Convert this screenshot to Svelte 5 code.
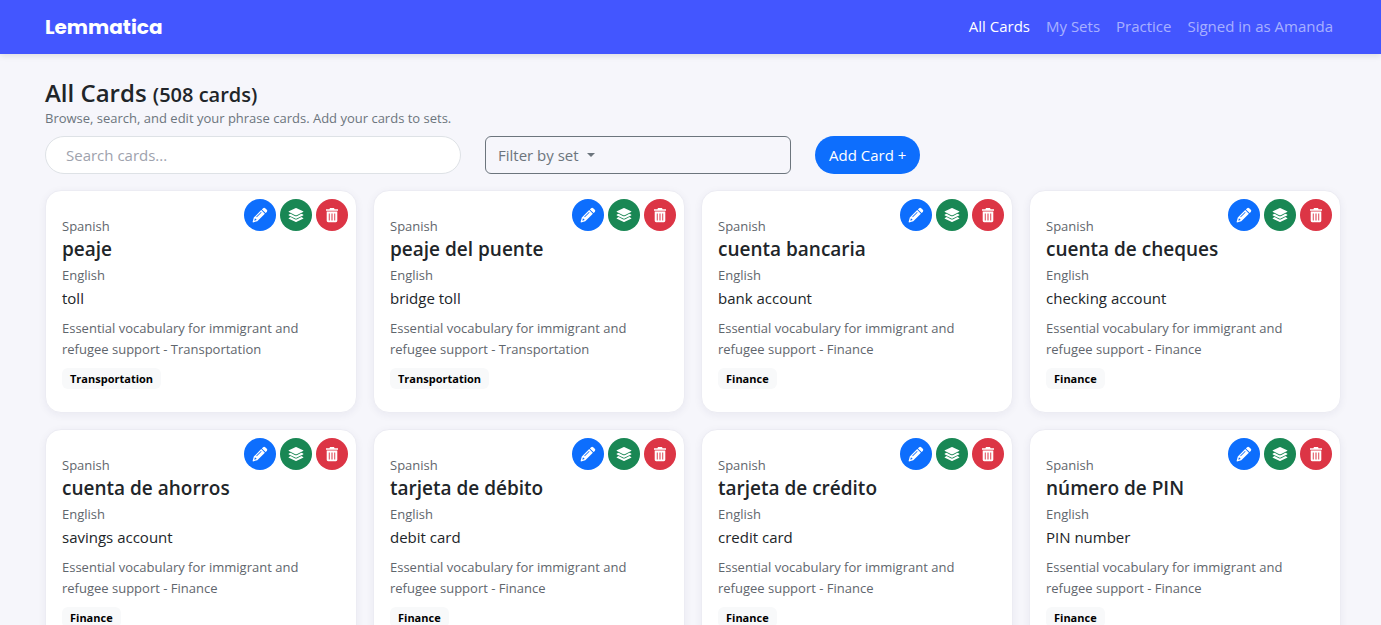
<script lang="ts">
  type Card = {
    id: number;
    phrase: string;
    translation: string;
    set: string;
  };

  const links = ['All Cards', 'My Sets', 'Practice', 'Signed in as Amanda'];
  const total = 508;

  const cards: Card[] = [
    { id: 1, phrase: 'peaje', translation: 'toll', set: 'Transportation' },
    { id: 2, phrase: 'peaje del puente', translation: 'bridge toll', set: 'Transportation' },
    { id: 3, phrase: 'cuenta bancaria', translation: 'bank account', set: 'Finance' },
    { id: 4, phrase: 'cuenta de cheques', translation: 'checking account', set: 'Finance' },
    { id: 5, phrase: 'cuenta de ahorros', translation: 'savings account', set: 'Finance' },
    { id: 6, phrase: 'tarjeta de débito', translation: 'debit card', set: 'Finance' },
    { id: 7, phrase: 'tarjeta de crédito', translation: 'credit card', set: 'Finance' },
    { id: 8, phrase: 'número de PIN', translation: 'PIN number', set: 'Finance' }
  ];

  let search = $state('');

  let visible = $derived(
    cards.filter((c) => `${c.phrase} ${c.translation}`.toLowerCase().includes(search.toLowerCase()))
  );
</script>

<header class="navbar">
  <div class="container navbar-inner">
    <a class="brand" href="/">Lemmatica</a>
    <nav>
      {#each links as link, i}
        <a class="nav-link" class:active={i === 0} href="/">{link}</a>
      {/each}
    </nav>
  </div>
</header>

<main class="container">
  <h1>All Cards <small>({total} cards)</small></h1>
  <p class="subtitle">Browse, search, and edit your phrase cards. Add your cards to sets.</p>

  <div class="toolbar">
    <input class="search" type="search" placeholder="Search cards..." aria-label="Search cards" bind:value={search} />
    <button class="filter" type="button" aria-haspopup="true">
      Filter by set <span class="caret"></span>
    </button>
    <div class="add">
      <button class="add-button" type="button">Add Card +</button>
    </div>
  </div>

  <div class="cards">
    {#each visible as card (card.id)}
      <article class="card">
        <div class="actions">
          <button class="action edit" type="button" aria-label="Edit {card.phrase}">
            <svg viewBox="0 0 16 16" width="16" height="16">
              <path d="M11.1 1.2a1.5 1.5 0 0 1 2.1 0l1.6 1.6a1.5 1.5 0 0 1 0 2.1l-1.2 1.2-3.7-3.7z" />
              <path fill-rule="evenodd" d="M9.2 3.1 12.9 6.8 5.3 14.2 1 15.4.6 15 1.8 10.6zM9 4.9 4.2 9.7l.6.6 4.8-4.8zM2.9 11.6l-.6 2.1 2.1-.6-.2-1.2z" />
            </svg>
          </button>
          <button class="action sets" type="button" aria-label="Add {card.phrase} to a set">
            <svg viewBox="0 0 16 16" width="16" height="16">
              <path d="M.9 4.3 7.3 1.2a1.6 1.6 0 0 1 1.4 0l6.4 3.1q.7.4 0 .8L8.7 8.2a1.6 1.6 0 0 1-1.4 0L.9 5.1q-.7-.4 0-.8z" />
              <path d="M.9 7.6l1.7-.8 4.2 2.1q1.2.5 2.4 0l4.2-2.1 1.7.8q.7.4 0 .8l-6.4 3.1a1.6 1.6 0 0 1-1.4 0L.9 8.4q-.7-.4 0-.8z" />
              <path d="M.9 10.9l1.7-.8 4.2 2.1q1.2.5 2.4 0l4.2-2.1 1.7.8q.7.4 0 .8l-6.4 3.1a1.6 1.6 0 0 1-1.4 0L.9 11.7q-.7-.4 0-.8z" />
            </svg>
          </button>
          <button class="action delete" type="button" aria-label="Delete {card.phrase}">
            <svg viewBox="0 0 16 16" width="16" height="16">
              <path d="M2 2.2h3.4L6 1h4l.6 1.2H14v1.6H2z" />
              <path fill-rule="evenodd" d="M2.7 4.6h10.6v9.2q0 1.4-1.4 1.4H4.1q-1.4 0-1.4-1.4zM4.8 6.4v7h.9v-7zM7.5 6.4v7h1v-7zM10.3 6.4v7h.9v-7z" />
            </svg>
          </button>
        </div>
        <div class="language">Spanish</div>
        <h2>{card.phrase}</h2>
        <div class="language">English</div>
        <p class="translation">{card.translation}</p>
        <p class="notes">Essential vocabulary for immigrant and refugee support - {card.set}</p>
        <span class="badge">{card.set}</span>
      </article>
    {/each}
  </div>
</main>

<style>
  :global(body) {
    margin: 0;
    background-color: #f6f6fb;
    color: #212529;
    font-family: "Segoe UI", "Open Sans", "Noto Sans", sans-serif;
    font-size: 15px;
    line-height: 24px;
    overflow-x: hidden;
  }

  h1,
  h2,
  p {
    margin: 0;
  }

  button,
  input {
    box-sizing: border-box;
    font: inherit;
  }

  .container {
    box-sizing: border-box;
    max-width: 1386px;
    padding: 0 40px 0 45px;
  }

  .navbar {
    background-color: #4356ff;
    box-shadow: 0 2px 6px rgba(0, 0, 0, 0.1);
  }

  .navbar-inner {
    display: flex;
    align-items: center;
    justify-content: space-between;
    min-height: 54px;
  }

  .brand {
    color: #fff;
    font-family: Poppins, Inter, sans-serif;
    font-size: 20px;
    font-weight: 700;
    text-decoration: none;
  }

  nav {
    display: flex;
  }

  .nav-link {
    padding: 7px 8px 9px;
    color: rgba(255, 255, 255, 0.55);
    text-decoration: none;
  }

  .nav-link.active {
    color: #fff;
  }

  main {
    margin-top: 24px;
  }

  h1 {
    font-size: 24px;
    font-weight: 600;
    line-height: 30px;
  }

  h1 small {
    font-size: 20px;
    line-height: 20px;
  }

  .subtitle {
    color: #6c757d;
    font-size: 13px;
    line-height: 20px;
  }

  .toolbar {
    display: grid;
    grid-template-columns: repeat(12, 1fr);
    gap: 24px;
    margin: 8px 0 16px;
  }

  .search {
    grid-column: span 4;
    height: 38px;
    padding: 6px 20px;
    border: 1px solid #dee2e6;
    border-radius: 19px;
    background-color: #fff;
    color: #212529;
    appearance: none;
  }

  .search::placeholder {
    color: #9ea2ad;
  }

  .filter {
    grid-column: span 3;
    padding: 6px 12px;
    border: 1px solid #6c757d;
    border-radius: 6px;
    background: transparent;
    color: #6c757d;
    text-align: left;
  }

  .caret {
    display: inline-block;
    margin-left: 4px;
    vertical-align: 4px;
    border-top: 4px solid;
    border-right: 4px solid transparent;
    border-left: 4px solid transparent;
  }

  .add {
    grid-column: span 5;
  }

  .add-button {
    height: 38px;
    padding: 6px 14px;
    border: 0;
    border-radius: 19px;
    background-color: #0d6efd;
    color: #fff;
  }

  .cards {
    display: grid;
    grid-template-columns: repeat(4, 1fr);
    gap: 16px;
  }

  .card {
    position: relative;
    padding: 25px 16px 23px;
    border: 1px solid #ececf3;
    border-radius: 16px;
    background-color: #fff;
    box-shadow: 0 2px 8px rgba(30, 30, 80, 0.06);
  }

  .actions {
    position: absolute;
    top: 8px;
    right: 8px;
    display: flex;
    gap: 4px;
  }

  .action {
    display: flex;
    align-items: center;
    justify-content: center;
    width: 32px;
    height: 32px;
    padding: 0;
    border: 0;
    border-radius: 50%;
  }

  .action svg {
    fill: #fff;
  }

  .edit {
    background-color: #0d6efd;
  }

  .sets {
    background-color: #198754;
  }

  .delete {
    background-color: #dc3545;
  }

  .language {
    color: #5f666d;
    font-size: 13px;
    line-height: 21px;
  }

  h2 {
    margin-bottom: 4px;
    font-size: 19px;
    font-weight: 600;
    line-height: 24px;
  }

  .translation {
    margin-bottom: 8px;
  }

  .notes {
    margin-bottom: 8px;
    color: #5f666d;
    font-size: 13px;
    line-height: 21px;
  }

  .badge {
    display: block;
    width: fit-content;
    padding: 0 8px;
    border-radius: 6px;
    background-color: #f8f9fa;
    color: #000;
    font-size: 11px;
    font-weight: 700;
    line-height: 21px;
  }

  @media (max-width: 900px) {
    .cards {
      grid-template-columns: repeat(2, 1fr);
    }
  }
</style>
